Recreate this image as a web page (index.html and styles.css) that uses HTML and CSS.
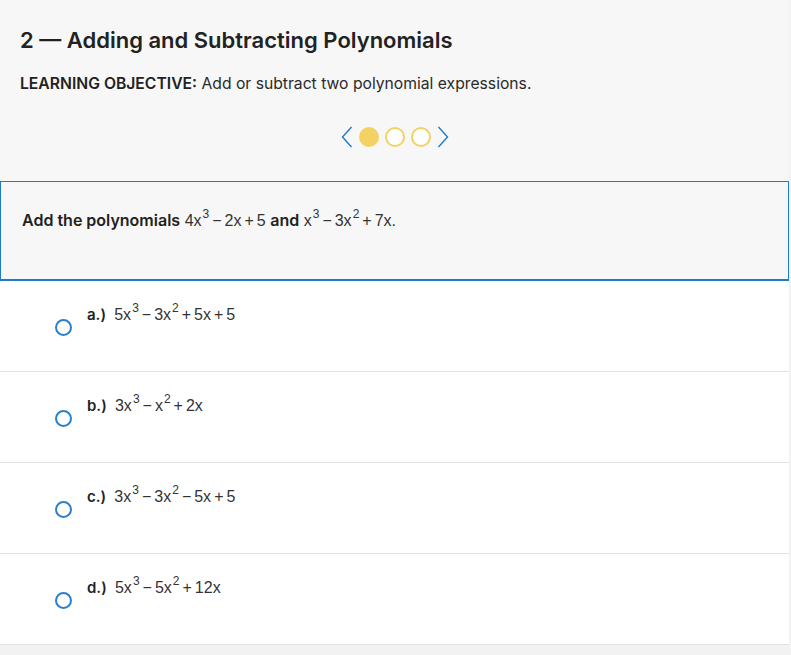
FILE: index.html
```html
<!DOCTYPE html>
<html lang="en">
  <head>
    <meta charset="UTF-8" />
    <title>Adding and Subtracting Polynomials</title>
    <link rel="stylesheet" href="styles.css">
  </head>
  <body>
    <div class="page">
      <div class="intro">
        <h1 class="title">2 — Adding and Subtracting Polynomials</h1>
        <p class="objective"><strong>LEARNING OBJECTIVE:</strong> Add or subtract two polynomial expressions.</p>
        <div class="pager">
          <svg class="chevron" width="12" height="22" viewBox="0 0 12 22">
            <path d="M10.5 1 L1.5 11 L10.5 21" fill="none" stroke="#1f7bc8" stroke-width="1.4" />
          </svg>
          <span class="dot active"></span>
          <span class="dot"></span>
          <span class="dot"></span>
          <svg class="chevron" width="12" height="22" viewBox="0 0 12 22">
            <path d="M1.5 1 L10.5 11 L1.5 21" fill="none" stroke="#1f7bc8" stroke-width="1.4" />
          </svg>
        </div>
      </div>

      <div class="question">
        <p><strong>Add the polynomials</strong> <span class="math">4x<sup>3</sup><b>−</b>2x<b>+</b>5</span> <strong>and</strong> <span class="math">x<sup>3</sup><b>−</b>3x<sup>2</sup><b>+</b>7x.</span></p>
      </div>

      <ul class="choices">
        <li class="choice">
          <span class="radio"></span>
          <span class="label">a.)</span>
          <span class="math">5x<sup>3</sup><b>−</b>3x<sup>2</sup><b>+</b>5x<b>+</b>5</span>
        </li>
        <li class="choice">
          <span class="radio"></span>
          <span class="label">b.)</span>
          <span class="math">3x<sup>3</sup><b>−</b>x<sup>2</sup><b>+</b>2x</span>
        </li>
        <li class="choice">
          <span class="radio"></span>
          <span class="label">c.)</span>
          <span class="math">3x<sup>3</sup><b>−</b>3x<sup>2</sup><b>−</b>5x<b>+</b>5</span>
        </li>
        <li class="choice">
          <span class="radio"></span>
          <span class="label">d.)</span>
          <span class="math">5x<sup>3</sup><b>−</b>5x<sup>2</sup><b>+</b>12x</span>
        </li>
      </ul>
    </div>
  </body>
</html>
```

FILE: styles.css
```css
body {
  margin: 0;
  padding: 0;
  font-family: "Inter", "Liberation Sans", sans-serif;
  background-color: #f2f2f2;
  color: #222;
}

.page {
  width: 789px;
  background: white;
}

.intro {
  background-color: #f7f7f7;
  padding: 26px 20px 0 20px;
  height: 155px;
}

.title {
  font-size: 22px;
  font-weight: 600;
  line-height: 28px;
  margin: 0;
}

.objective {
  font-size: 15.7px;
  line-height: 20px;
  margin: 20px 0 0 0;
  color: #2a2a2a;
}

.objective strong {
  font-weight: 600;
  color: #222;
}

.pager {
  display: flex;
  justify-content: center;
  align-items: center;
  gap: 6px;
  margin-top: 32px;
}

.chevron {
  display: block;
}

.dot {
  width: 16px;
  height: 16px;
  border-radius: 50%;
  border: 2px solid #f3d263;
  background: white;
}

.dot.active {
  background: #f3d263;
}

/* question box */
.question {
  background-color: #f7f7f7;
  border: 1px solid #1f7bc8;
  border-bottom-width: 2px;
  height: 100px;
  box-sizing: border-box;
  padding: 0 21px;
}

.question p {
  margin: 27px 0 0 0;
  font-size: 16px;
  line-height: 22px;
}

.question strong {
  font-weight: 600;
}

.math {
  font-family: "Liberation Sans", sans-serif;
  font-size: 16px;
  color: #333;
  white-space: nowrap;
}

.math b {
  font-weight: normal;
  margin: 0 3px;
}

.math sup {
  font-size: 12px;
  vertical-align: 8px;
  line-height: 0;
  margin-left: 1px;
}

/* answer list */
.choices {
  list-style: none;
  margin: 0;
  padding: 0;
}

.choice {
  position: relative;
  height: 91px;
  box-sizing: border-box;
  border-bottom: 1px solid #e2e2e2;
  padding: 23px 0 0 87px;
  font-size: 15px;
  line-height: 22px;
}

.radio {
  position: absolute;
  left: 55px;
  top: 38px;
  width: 13px;
  height: 13px;
  border: 2px solid #2c7fcc;
  border-radius: 50%;
}

.label {
  font-weight: 600;
  margin-right: 4px;
}
```
